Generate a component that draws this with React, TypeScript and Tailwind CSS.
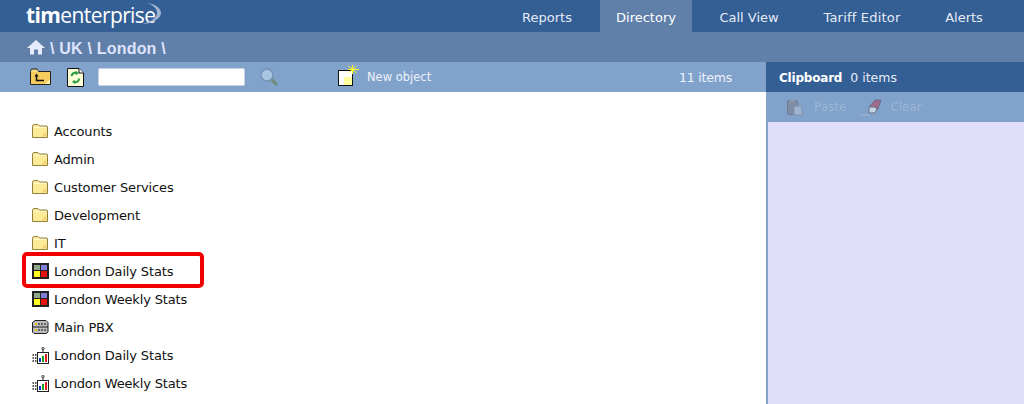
import React from 'react'

const font = "font-['DejaVu_Sans',sans-serif]"

const FolderIcon = () => (
  <svg width="16" height="16" viewBox="0 0 16 16" className="shrink-0">
    <path d="M0.5 3 L1.5 1.5 H6 L7.5 3 H15 L15.5 4 V14.5 H0.5 Z" fill="#fdeb98" stroke="#8f8240" />
    <path d="M1.5 4.5 H14.5" stroke="#fff9d0" />
    <path d="M9 13.5 L14.5 8 V13.5 Z" fill="#f2d475" />
  </svg>
)

const ReportIcon = () => (
  <svg width="17" height="16" viewBox="0 0 17 16" className="shrink-0">
    <rect x="0" y="0" width="17" height="16" fill="#222" />
    <rect x="2" y="2" width="6" height="5" fill="#8fa88a" />
    <rect x="9" y="2" width="6" height="5" fill="#8080d8" />
    <rect x="2" y="8" width="6" height="6" fill="#ffff20" />
    <rect x="9" y="8" width="6" height="6" fill="#e81010" />
  </svg>
)

const PbxIcon = () => (
  <svg width="17" height="16" viewBox="0 0 17 16" className="shrink-0">
    <path d="M3 1.5 H14 L16 3.5 V13 L14 14.5 H2 L0.5 13 V3.5 Z" fill="#bdbdbd" stroke="#222" />
    <path d="M1 8 H16" stroke="#222" />
    <path d="M3 5 H14 M3 11 H14" stroke="#666" strokeWidth="2" strokeDasharray="2 1" />
    <path d="M3 5 H5 M3 11 H5" stroke="#e8c020" strokeWidth="2" />
  </svg>
)

const ChartIcon = () => (
  <svg width="17" height="17" viewBox="0 0 17 17" className="shrink-0">
    <rect x="5.5" y="5.5" width="11" height="11" fill="#fff" stroke="#222" />
    <rect x="7" y="11" width="2" height="4" fill="#1030d0" />
    <rect x="10" y="9" width="2" height="6" fill="#18a018" />
    <rect x="13" y="7" width="2" height="8" fill="#e02020" />
    <path d="M11 5 V2" stroke="#222" />
    <circle cx="11" cy="1.5" r="1.3" fill="#aaa" stroke="#222" strokeWidth="0.6" />
    <path d="M0.5 8 H5 M0.5 11 H5 M0.5 14 H5" stroke="#222" strokeWidth="1.4" strokeDasharray="1.5 1" />
  </svg>
)

const UpFolderIcon = () => (
  <svg width="21" height="18" viewBox="0 0 21 18">
    <path d="M0.5 4 L1.5 1 H7 L8.5 3.5 H20.5 V16.5 H0.5 Z" fill="#f6cc5c" stroke="#222" />
    <path d="M1 3 H8" stroke="#fff0b0" />
    <path d="M15 16 L20 11 V16 Z" fill="#fff2a8" />
    <path d="M6.5 8 V12.5 H14" fill="none" stroke="#111" strokeWidth="1.5" />
    <path d="M4.5 8.5 L6.5 5.5 L8.5 8.5 Z" fill="#111" />
  </svg>
)

const RefreshIcon = () => (
  <svg width="17" height="19" viewBox="0 0 17 19">
    <path d="M0.5 0.5 H12 L16.5 5 V18.5 H0.5 Z" fill="#ffffd8" stroke="#111" />
    <path d="M12 0.5 V5 H16.5" fill="#fff" stroke="#111" />
    <path d="M4.5 8 C5 5 8 4 10 5 M12 10.5 C12 13.5 9 15 7 14" fill="none" stroke="#1f9a3c" strokeWidth="2" />
    <path d="M9 3 L12 5.5 L8.5 7 Z M8 12 L5 13.5 L8 16 Z" fill="#1f9a3c" />
  </svg>
)

const SearchIcon = () => (
  <svg width="18" height="18" viewBox="0 0 18 18">
    <path d="M11 11 L16 16" stroke="#6d8a78" strokeWidth="3" strokeLinecap="round" />
    <circle cx="7" cy="7" r="6" fill="#a8c4de" stroke="#7391b5" strokeWidth="1.3" />
  </svg>
)

const NewObjectIcon = () => (
  <svg width="22" height="22" viewBox="0 0 22 22">
    <rect x="0.5" y="5.5" width="14" height="15" fill="#fff" stroke="#111" />
    <rect x="6" y="12" width="8" height="8" fill="#ffffa0" />
    <path d="M14.5 0 V9 M10 4.5 H21 M10.5 1 L18.5 8 M18.5 1 L10.5 8" stroke="#ffff30" />
  </svg>
)

const PasteIcon = () => (
  <svg width="16" height="17" viewBox="0 0 16 17">
    <rect x="0.5" y="1.5" width="10" height="14" rx="1" fill="#7f8ea6" stroke="#6d7c94" />
    <rect x="3" y="0" width="5" height="3" fill="#8d9bb0" />
    <rect x="7" y="7" width="8" height="9" fill="#9fb3cf" stroke="#7f93b0" />
  </svg>
)

const EraserIcon = () => (
  <svg width="23" height="17" viewBox="0 0 23 17">
    <path d="M0 16 H10" stroke="#a3b5d0" strokeWidth="2" strokeDasharray="1 1" />
    <path d="M9 8 L15 1 H21 L18 10 L16 12 Z" fill="#a0688c" stroke="#66728c" />
    <path d="M9 8 H15 L17 10 L15 14 H9 Z" fill="#c5d2e4" stroke="#66728c" />
  </svg>
)

const tabs = [
  { label: 'Reports', width: 'w-[106px]' },
  { label: 'Directory', width: 'w-[92px]', active: true },
  { label: 'Call View', width: 'w-[114px]' },
  { label: 'Tariff Editor', width: 'w-[112px] tracking-[0.2px]' },
  { label: 'Alerts', width: 'w-[92px]' },
]

const items = [
  { name: 'Accounts', icon: <FolderIcon /> },
  { name: 'Admin', icon: <FolderIcon /> },
  { name: 'Customer Services', icon: <FolderIcon /> },
  { name: 'Development', icon: <FolderIcon /> },
  { name: 'IT', icon: <FolderIcon /> },
  { name: 'London Daily Stats', icon: <ReportIcon />, marked: true },
  { name: 'London Weekly Stats', icon: <ReportIcon /> },
  { name: 'Main PBX', icon: <PbxIcon /> },
  { name: 'London Daily Stats', icon: <ChartIcon /> },
  { name: 'London Weekly Stats', icon: <ChartIcon /> },
]

export default function App() {
  return (
    <div className={`w-[1024px] h-[404px] overflow-hidden bg-white flex flex-col ${font}`}>
      <div className="h-8 bg-[#335f95] flex items-center justify-between pl-[26px] pr-[14px] shrink-0">
        <div className="relative flex items-baseline text-white text-[21px] font-['Open_Sans',sans-serif] tracking-[-0.6px]">
          <span className="font-bold">tim</span>
          <span>enterprise</span>
          <svg width="24" height="24" viewBox="0 0 24 24" className="absolute left-[114px] top-[2px]">
            <path d="M7 1 C15 2 21 6 21 11 C21 17 11 22 2 22 C9 20 16 17 17 12 C18 7 13 3 7 1 Z" fill="#9fb4d0" />
          </svg>
        </div>
        <nav className="flex h-full text-[13px] text-[#e6ebf5]">
          {tabs.map((t) => (
            <div
              key={t.label}
              className={`flex items-center justify-center h-full pt-[3px] ${t.width} ${t.active ? 'bg-[#6080aa] text-white' : ''}`}
            >
              {t.label}
            </div>
          ))}
        </nav>
      </div>

      <div className="h-[30px] bg-[#6080aa] flex items-center pl-[27px] gap-[5px] text-[#dfe3fb] text-[16px] font-bold tracking-[0.2px] font-['Liberation_Sans',sans-serif] shrink-0">
        <svg width="18" height="16" viewBox="0 0 18 16">
          <path d="M9 1 L18 9 H15 V15.5 H11 V10.5 H7 V15.5 H3 V9 H0 Z" fill="#e8ebfb" />
        </svg>
        <span className="pt-[3px]">\ UK \ London \</span>
      </div>

      <div className="flex flex-1 min-h-0">
        <div className="flex-1 flex flex-col min-w-0">
          <div className="h-[30px] bg-[#80a2cb] flex items-center pl-[30px] shrink-0 text-[#eef2fb] text-[12px]">
            <UpFolderIcon />
            <div className="ml-[16px]">
              <RefreshIcon />
            </div>
            <input
              readOnly
              className="ml-[14px] w-[147px] h-[18px] bg-white border border-[#c8d4e6] rounded-[2px]"
            />
            <div className="ml-[15px]">
              <SearchIcon />
            </div>
            <div className="ml-[60px] mb-[2px]">
              <NewObjectIcon />
            </div>
            <span className="ml-[7px] text-[11.5px] pt-[2px]">New object</span>
            <span className="ml-auto mr-[34px] text-[12.5px] tracking-[-0.2px] pt-[2px]">11 items</span>
          </div>
          <ul className="pt-[25px] pl-[32px] text-[13px] tracking-[-0.15px] text-[#111]">
            {items.map((item, i) => (
              <li key={i} className="relative h-7 flex items-center">
                <span className="w-[22px] flex items-center">{item.icon}</span>
                <span className="pt-[2px]">{item.name}</span>
                {item.marked && (
                  <div className="absolute left-[-10px] top-[-5px] w-[182px] h-[36px] border-[4px] border-[#f00000] rounded-[5px]" />
                )}
              </li>
            ))}
          </ul>
        </div>

        <div className="w-[258px] shrink-0 flex flex-col">
          <div className="h-[30px] bg-[#335f95] flex items-center pl-[13px] pt-[2px] text-white text-[12.5px] shrink-0">
            <span className="font-bold text-[12px] tracking-[-0.2px]">Clipboard</span>
            <span className="ml-[8px] text-[#e6ebf5]">0 items</span>
          </div>
          <div className="h-[30px] bg-[#80a2cb] flex items-center pl-[21px] text-[12px] text-[#9fb6d4] shrink-0">
            <PasteIcon />
            <span className="ml-[11px]">Paste</span>
            <div className="ml-[14px]">
              <EraserIcon />
            </div>
            <span className="ml-[7px]">Clear</span>
          </div>
          <div className="flex-1 bg-[#dfdffb] border-l-2 border-[#80a2cb]" />
        </div>
      </div>
    </div>
  )
}
